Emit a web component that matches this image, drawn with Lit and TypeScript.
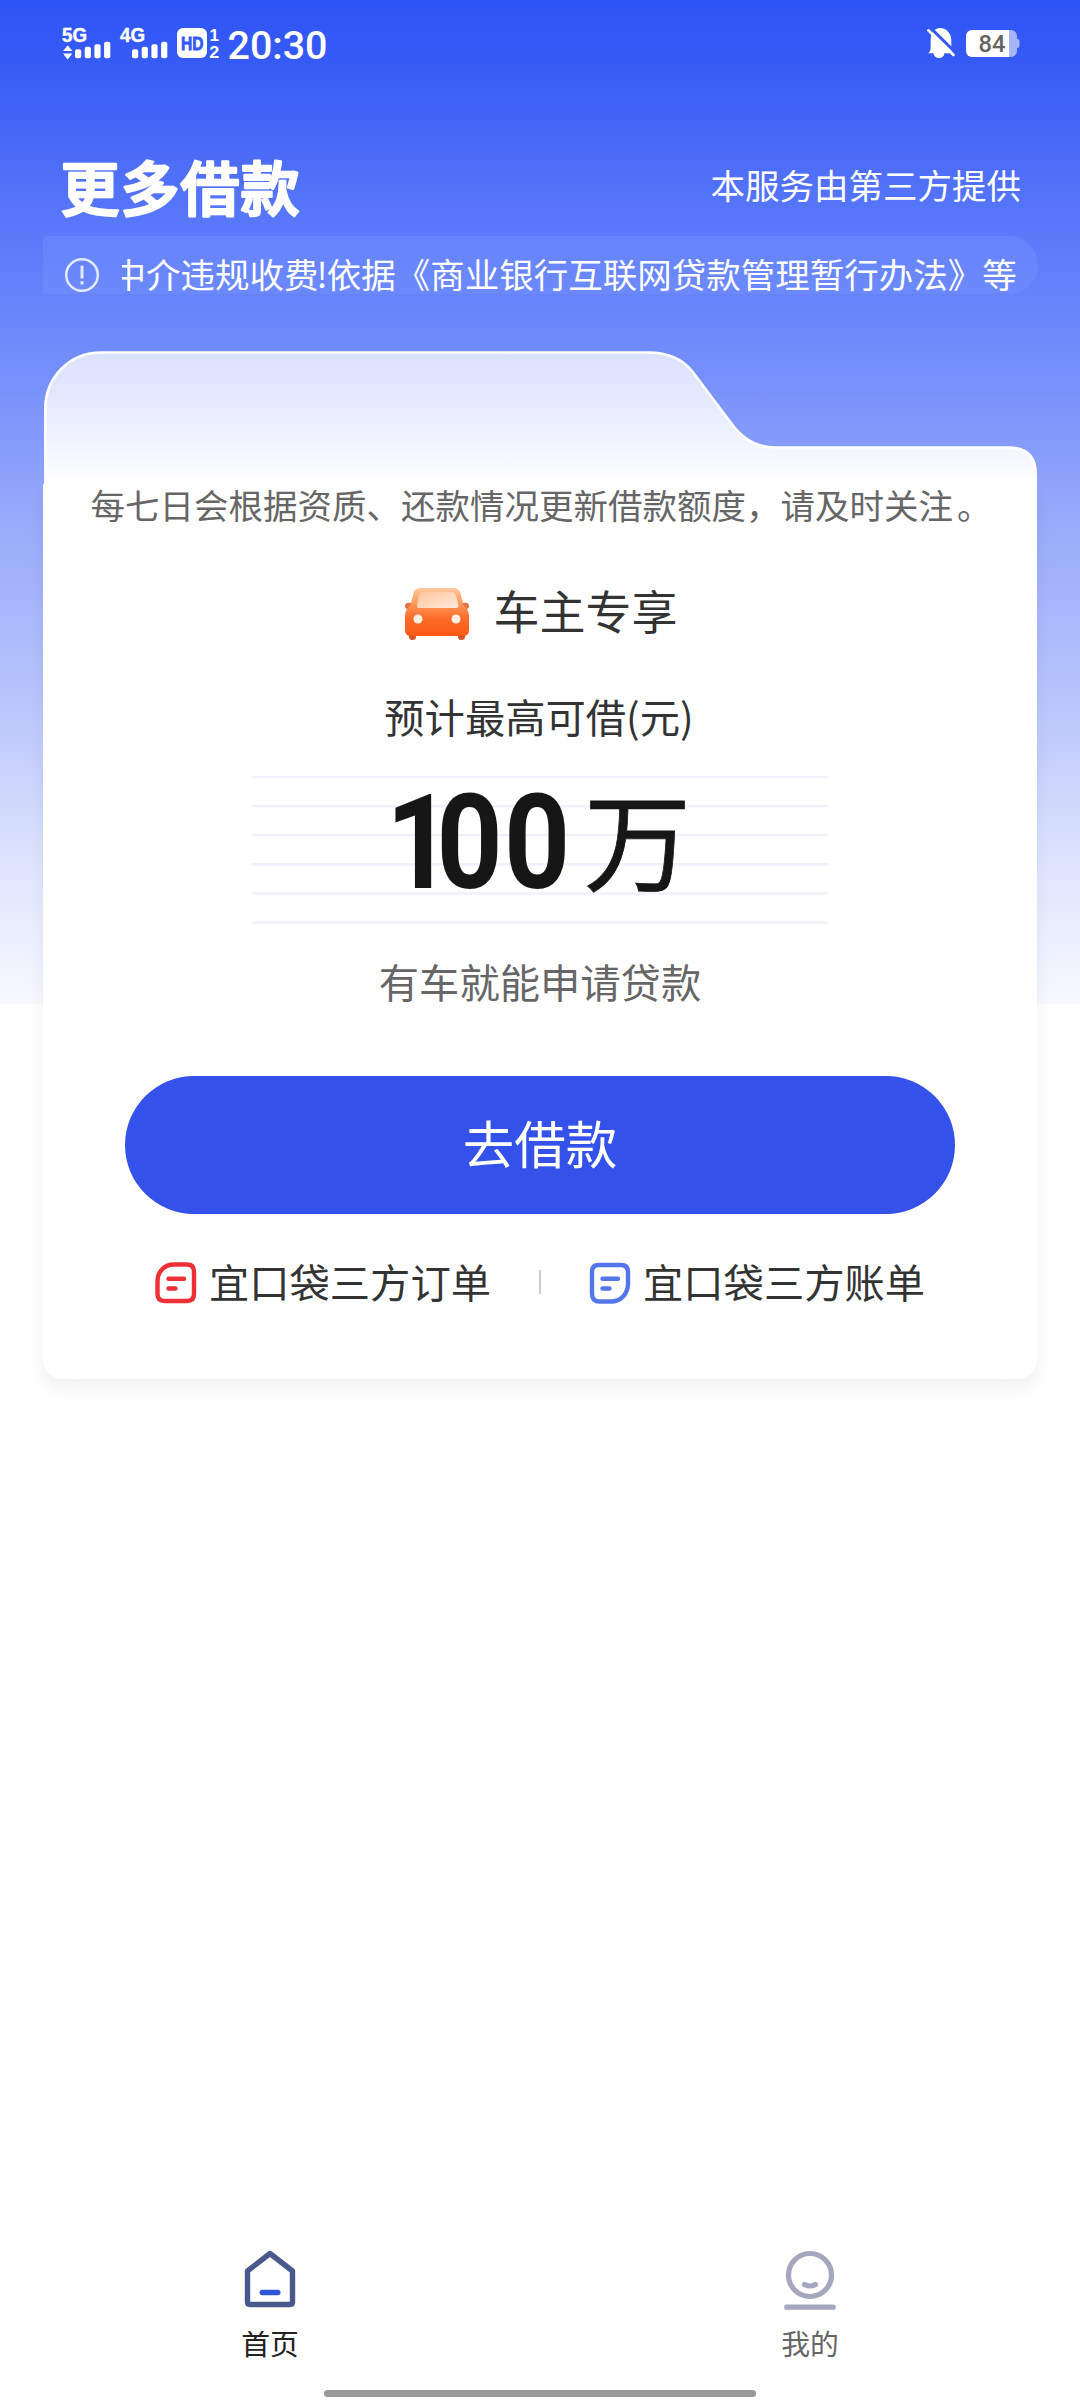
import { LitElement, html, css, svg } from "lit";
import { customElement, property } from "lit/decorators.js";

const FONT = css`"Noto Sans CJK SC", "Noto Sans", sans-serif`;

@customElement("status-bar")
class StatusBar extends LitElement {
  static styles = css`
    :host { display: block; height: 84px; }
    .bar { display: flex; justify-content: space-between; padding: 14px 60px 0 60px; }
    svg { display: block; overflow: visible; }
    text { font-family: Roboto, sans-serif; fill: #fff; }
    .net { font: 700 19.5px "Liberation Sans", sans-serif; stroke: #fff; stroke-width: 0.4; }
    .hd { font: 700 19px "Liberation Sans", sans-serif; fill: #3459f5; stroke: #3459f5; stroke-width: 0.8; }
    .sim { font: 700 17px "Liberation Sans", sans-serif; }
    .time { font-size: 38px; font-weight: 500; }
    .level { font-size: 23px; font-weight: 500; fill: #64665f; }
  `;

  private bars(x: number) {
    return [9, 11.5, 14, 16.5].map(
      (h, i) => svg`<rect x=${x + i * 9.7} y=${38.3 - h} width="6.2" height=${h} rx="2" fill="#fff"/>`
    );
  }

  render() {
    return html`<div class="bar">
      <svg width="280" height="56" viewBox="0 -6 280 56">
        <text class="net" x="2" y="22" textLength="25" lengthAdjust="spacingAndGlyphs">5G</text>
        <path d="M3 31h9.4L7.7 25.6zM3 33.6h9.4L7.7 39.4z" fill="#fff"/>
        ${this.bars(15)}
        <text class="net" x="60" y="22" textLength="25" lengthAdjust="spacingAndGlyphs">4G</text>
        ${this.bars(72)}
        <rect x="117" y="8" width="30" height="30" rx="6" fill="#fff"/>
        <text class="hd" x="121" y="30" textLength="22.5" lengthAdjust="spacingAndGlyphs">HD</text>
        <text class="sim" x="149.500" y="20.5" textLength="9">1</text>
        <text class="sim" x="149.2" y="37.5" textLength="10" lengthAdjust="spacingAndGlyphs">2</text>
        <text class="time" x="167.5" y="38.8" textLength="100" lengthAdjust="spacingAndGlyphs">20:30</text>
      </svg>
      <svg width="98" height="56" viewBox="0 -6 98 56">
        <path d="M6 33.2c2-1.400 2.600-3 2.600-5.500v-7.200C8.600 13 12.500 8 18 8s11.300 4.700 11.300 12v8c0 2.600.6 4 2.300 5.200zM11.500 33.200h11c-.3 3-2.500 4.800-5.500 4.800s-5.200-1.800-5.500-4.800z" fill="#fff"/>
        <path d="M8.200 7.500 34.500 33.500" stroke="#3458f5" stroke-width="3"/>
        <path d="M6.300 10.300 31.500 35" stroke="#fff" stroke-width="2.600" stroke-linecap="round"/>
        <path d="M44 16a6 6 0 0 1 6-6h37v27H50a6 6 0 0 1-6-6z" fill="#fff"/>
        <path d="M87 10h2a6 6 0 0 1 6 6v3h.5q2 0 2 2v5q0 2-2 2H95v3a6 6 0 0 1-6 6h-2z" fill="#a5b4fb"/>
        <text class="level" x="56.500" y="31.600" textLength="27" lengthAdjust="spacingAndGlyphs">84</text>
      </svg>
    </div>`;
  }
}

@customElement("page-header")
class PageHeader extends LitElement {
  static styles = css`
    :host { display: block; font-family: ${FONT}; color: #fff; }
    .row { display: flex; justify-content: space-between; height: 152px; padding: 0 59px 0 60px; }
    .logo { display: block; overflow: visible; }
    .title { font: 500 59px ${FONT}; fill: #fff; stroke: #fff; stroke-width: 2.6px; stroke-linejoin: round; }
    .by { padding-top: 75px; line-height: 50px; font-size: 34.5px; }
    .notice {
      display: flex; align-items: flex-start; gap: 22px; height: 58px; margin: 0 42px 0 43px; padding-left: 21px;
      border-radius: 4px 29px 29px 0; background: rgba(118, 146, 255, 0.38);
    }
    .icon { flex: none; margin-top: 20.500px; }
    .clip { overflow: hidden; flex: 1; height: 64px; }
    .msg { margin-left: -10.500px; padding-top: 11px; line-height: 52px; font-size: 34.5px; white-space: nowrap; }
    .mark { margin: 0 -1px 0 -2px; }
  `;
  render() {
    return html`
      <div class="row">
        <svg class="logo" width="250" height="152" viewBox="0 0 250 152">
          <text class="title" x="0.5" y="126.500" textLength="239">更多借款</text>
        </svg>
        <div class="by">本服务由第三方提供</div>
      </div>
      <div class="notice">
        <svg class="icon" width="36" height="36" viewBox="0 0 36 36" fill="none" stroke="#e3e9ff">
          <circle cx="18" cy="18" r="15.800" stroke-width="2.500"/>
          <path d="M18 8.800v12.800M18 24.200v3.200" stroke-width="3"/>
        </svg>
        <div class="clip"><div class="msg">中介违规收费<span class="mark">!</span>依据《商业银行互联网贷款管理暂行办法》等</div></div>
      </div>`;
  }
}

@customElement("order-link")
class OrderLink extends LitElement {
  @property() label = "";
  @property() tone = "#ec2b31";
  @property({ type: Boolean }) bill = false;
  static styles = css`
    :host { display: flex; align-items: center; gap: 12px; font: 40.3px/58px ${FONT}; color: #333; white-space: nowrap; }
    svg { flex: none; margin-top: 2px; }
    span { margin-top: -1px; }
  `;
  render() {
    const outline = this.bill
      ? "M9.500 3H32q7 0 7 7v11.500C39 32 31.500 39.500 22 39.500H10.500Q3 39.500 3 32V10q0-7 6.500-7z"
      : "M19 2.500h13q7 0 7 7V32q0 7-7 7H9.500q-7 0-7-7V19.500C2.500 9.500 9.500 2.500 19 2.500z";
    return html`<svg width="42" height="42" viewBox="0 0 42 42" fill="none" stroke=${this.tone}
        stroke-width="4.400" stroke-linecap="round">
        <path d=${outline}/>
        <path d="M13.500 16.800h15.500M13.500 26.500h7"/>
      </svg><span>${this.label}</span>`;
  }
}

@customElement("loan-card")
class LoanCard extends LitElement {
  static styles = css`
    :host { display: block; font-family: ${FONT}; color: #333; }
    .card {
      position: relative; display: flex; flex-direction: column; align-items: center;
      height: 1028px; margin: 0 43px;
    }
    .tab { position: absolute; left: 0; top: 0; }
    .body {
      position: absolute; inset: 133px 0 0 0; background: #fff;
      border-radius: 0 0 20px 20px; box-shadow: 0 10px 18px rgba(0, 0, 0, 0.06);
    }
    .inner { position: relative; display: flex; flex-direction: column; align-items: center; width: 100%; }
    .tip { height: 50px; margin-top: 128px; margin-right: -2px; line-height: 50px; font-size: 34.5px; color: #666; white-space: nowrap; }
    .stop { margin-left: 4px; }
    .kind { display: flex; align-items: center; gap: 23px; height: 66px; margin-top: 50px; font-size: 46px; line-height: 66px; }
    .kind svg { margin-top: 3px; }
    .kind span { margin-top: -6px; }
    .caption { margin-top: 42px; margin-right: 2px; height: 58px; line-height: 58px; font-size: 40.3px; }
    .amount { display: block; margin-top: 30px; overflow: visible; }
    .num { font: 700 131px Roboto, sans-serif; fill: #161616; }
    .unit { font: 400 107px ${FONT}; fill: #161616; stroke: #161616; stroke-width: 0.8px; }
    .desc { margin-top: 27px; height: 58px; line-height: 58px; font-size: 40.3px; color: #666; }
    .go {
      width: 830px; height: 138px; margin-top: 66px; border: 0; border-radius: 69px; background: #3452ea;
      color: #fff; font: 51.500px/130px ${FONT}; padding: 0 0 6px;
    }
    .links { display: flex; align-items: center; gap: 48px; margin-top: 39px; }
    .sep { width: 2px; height: 24px; background: #ccc; }
  `;
  render() {
    return html`<div class="card">
      <div class="body"></div>
      <svg class="tab" width="994" height="136" viewBox="0 0 994 136">
        <defs>
          <linearGradient id="g" x1="0" y1="0" x2="0" y2="1">
            <stop offset="0" stop-color="#dbe0fe"/>
            <stop offset="0.5" stop-color="#eaeeff"/>
            <stop offset="0.97" stop-color="#fff"/>
          </linearGradient>
        </defs>
        <path d="M2.300 137V58C2.300 26 27 1.500 58 1.500H606C626 1.500 639 8 649 20L688 72C698 86 713 96.500 732 96.500H966Q992.700 97 992.700 123V137z"
          fill="url(#g)" stroke="#fff" stroke-width="2.600"/>
      </svg>
      <div class="inner">
        <div class="tip">每七日会根据资质、还款情况更新借款额度，请及时关注<span class="stop">。</span></div>
        <div class="kind">
          <svg width="68" height="54" viewBox="0 0 68 54">
            <defs>
              <linearGradient id="b" x1="0" y1="0" x2="0" y2="1">
                <stop offset="0" stop-color="#ffc89d"/><stop offset="0.3" stop-color="#ff9c61"/>
                <stop offset="0.65" stop-color="#fd6b26"/><stop offset="1" stop-color="#fb5a16"/>
              </linearGradient>
              <linearGradient id="w" x1="0" y1="0" x2="1" y2="1">
                <stop offset="0" stop-color="#ffc59b"/><stop offset="1" stop-color="#ffeadb"/>
              </linearGradient>
            </defs>
            <path d="M6 47h7v3q0 3-3.500 3T6 50zM55 47h7v3q0 3-3.500 3T55 50z" fill="#d9532a"/>
            <path d="M11 16.500Q2 14 2 19 2 23 9 22zM57 16.500Q66 14 66 19 66 23 59 22z" fill="#e57342"/>
            <path d="M18 1H50Q56 1 57.500 6L60.500 18Q66 23 66 29V43Q66 49 60 49H8Q2 49 2 43V29Q2 23 7.500 18L10.500 6Q12 1 18 1z" fill="url(#b)"/>
            <path d="M20 5H48Q52 5 53 9L55.500 18Q56 21 53 21H16Q13.500 21 14 18L16 9Q17 5 20 5z" fill="url(#w)"/>
            <circle cx="15" cy="32" r="4.500" fill="#fff0e4"/><circle cx="53" cy="32" r="4.500" fill="#fff0e4"/>
          </svg>
          <span>车主专享</span>
        </div>
        <div class="caption">预计最高可借(元)</div>
        <svg class="amount" width="576" height="150" viewBox="0 0 576 150">
          ${[0, 1, 2, 3, 4, 5].map((i) => svg`<rect x="0" y=${0.8 + i * 29.1} width="576" height="2.500" fill="#f1f1fb"/>`)}
          <g transform="translate(134 113) scale(0.88 1)"><text class="num" x="0 57.500 134">100</text></g>
          <text class="unit" x="332" y="107.500">万</text>
        </svg>
        <div class="desc">有车就能申请贷款</div>
        <button class="go">去借款</button>
        <div class="links">
          <order-link label="宜口袋三方订单" tone="#ec3035"></order-link>
          <div class="sep"></div>
          <order-link label="宜口袋三方账单" tone="#5376ea" bill></order-link>
        </div>
      </div>
    </div>`;
  }
}

@customElement("tab-bar")
class TabBar extends LitElement {
  static styles = css`
    :host { display: block; font: 28.8px/42px ${FONT}; }
    .tabs { display: grid; grid-template-columns: 1fr 1fr; height: 146px; }
    .item { display: flex; flex-direction: column; align-items: center; gap: 14px; color: #666; }
    .active { color: #222; }
    .mine { margin-bottom: -4px; }
    .handle { width: 432px; height: 7px; margin: 0 auto 3px; border-radius: 4px; background: #999; }
  `;
  render() {
    return html`<div class="tabs">
        <div class="item active">
          <svg width="60" height="64" viewBox="0 0 60 64" fill="none" stroke-linecap="round" stroke-linejoin="round">
            <path d="M30 9.500 52.500 27V58q0 2.500-2.500 2.500H10Q7.500 60.500 7.500 58V27z" stroke="#4b588c" stroke-width="5.400"/>
            <path d="M22.300 48.500h15.500" stroke="#3057d8" stroke-width="5.400"/>
          </svg>
          <span>首页</span>
        </div>
        <div class="item">
          <svg class="mine" width="60" height="68" viewBox="0 0 60 68" fill="none" stroke="#a4a7bd" stroke-linecap="round">
            <circle cx="30" cy="31" r="21.500" stroke-width="5.200"/>
            <path d="M24.500 40.500q5.500 3 11 0" stroke-width="5.200"/>
            <path d="M6.800 63.200h46.400" stroke-width="5.200"/>
          </svg>
          <span>我的</span>
        </div>
      </div>
      <div class="handle"></div>`;
  }
}

@customElement("app-root")
class AppRoot extends LitElement {
  static styles = css`
    :host { display: block; }
    .page {
      display: flex; flex-direction: column; width: 1080px; height: 2400px; overflow: hidden;
      background:
        linear-gradient(180deg, #2d54f4 0, #365af5 60px, #4869f6 140px, #5b7afa 236px, #6f8afb 340px, #8299fb 430px, #98aafa 520px, #b8c5fc 700px, #dde4fd 860px, #f8f9ff 1004px) 0 0 / 100% 1004px no-repeat,
        #fff;
    }
    .card { margin-top: 57px; }
    .space { flex: 1; }
  `;
  render() {
    return html`<div class="page">
      <status-bar></status-bar>
      <page-header></page-header>
      <loan-card class="card"></loan-card>
      <div class="space"></div>
      <tab-bar></tab-bar>
    </div>`;
  }
}
